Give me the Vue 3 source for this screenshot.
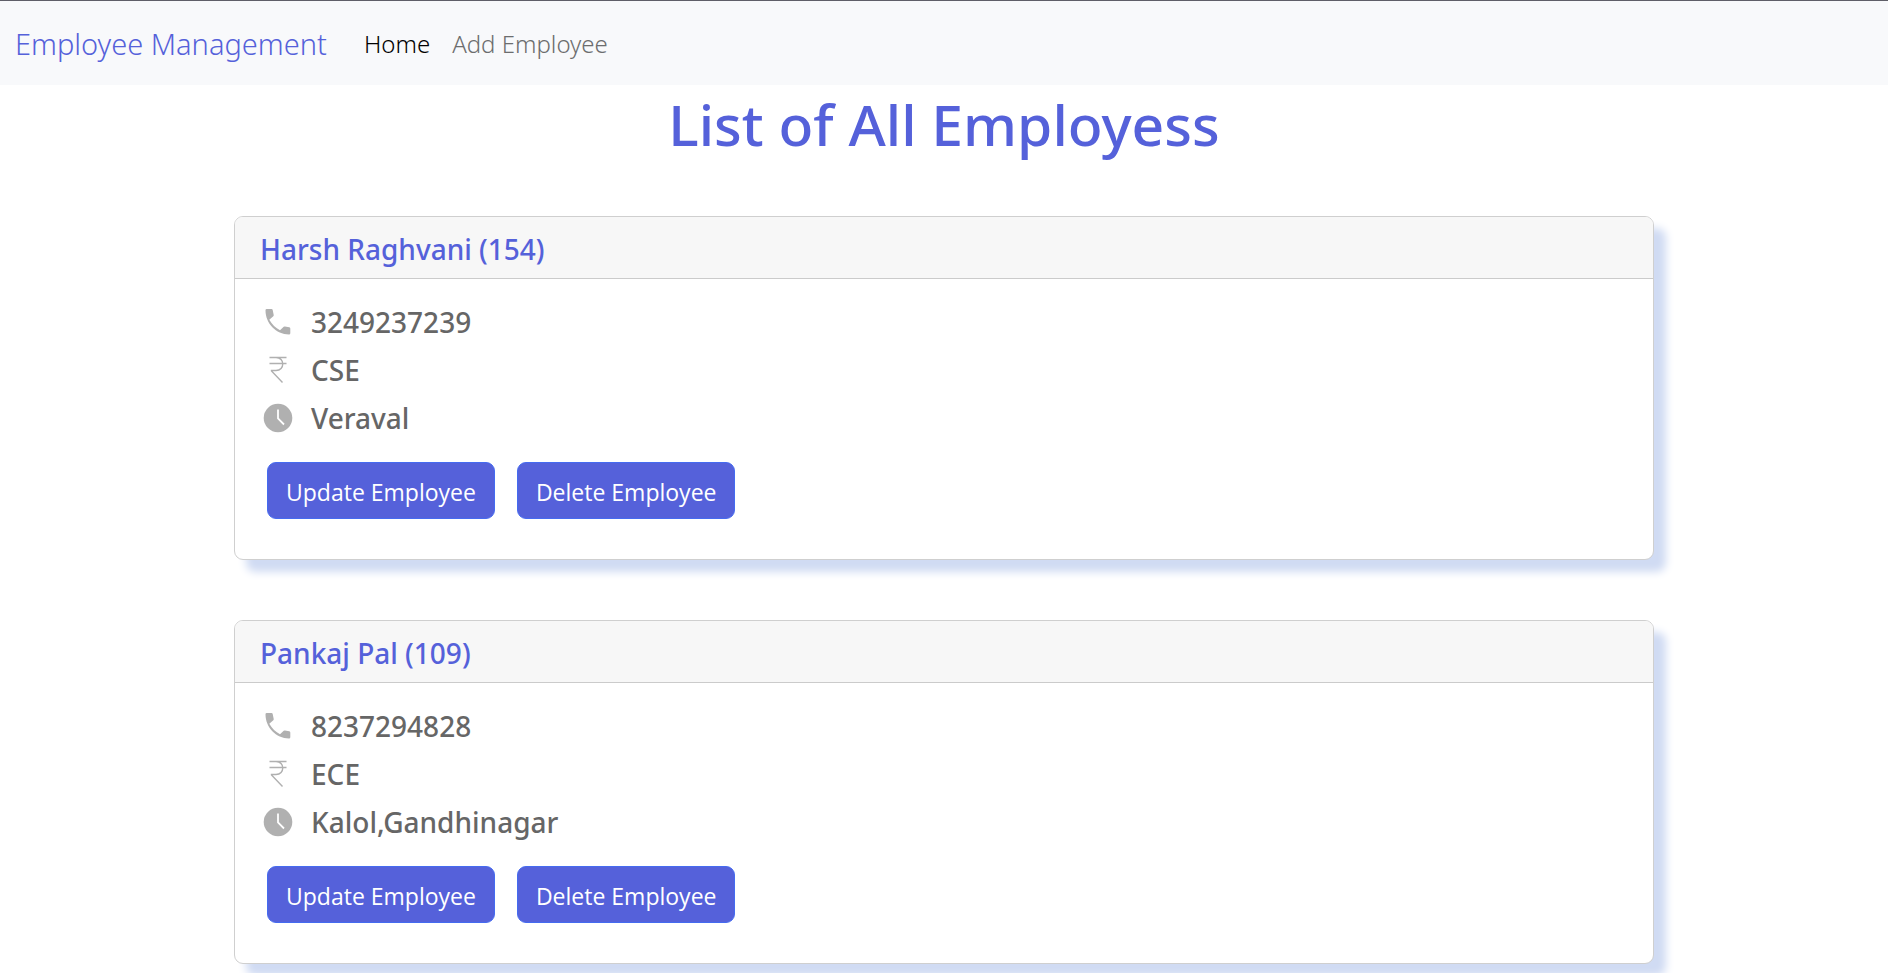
<script setup>
const employees = [
  { id: 154, name: 'Harsh Raghvani', phone: '3249237239', department: 'CSE', city: 'Veraval' },
  { id: 109, name: 'Pankaj Pal', phone: '8237294828', department: 'ECE', city: 'Kalol,Gandhinagar' },
]
</script>

<template>
  <nav class="navbar">
    <a class="brand" href="#">Employee Management</a>
    <a class="link active" href="#">Home</a>
    <a class="link" href="#">Add Employee</a>
  </nav>
  <main class="page">
    <h1 class="title">List of All Employess</h1>
    <section class="list">
      <article v-for="e in employees" :key="e.id" class="card">
        <h2 class="card-header">{{ e.name }} ({{ e.id }})</h2>
        <div class="card-body">
          <ul class="details">
            <li class="row">
              <svg class="icon" viewBox="0 0 30 30" aria-hidden="true">
                <path d="M2.500 3.200Q2.500 2 3.700 2H8.500Q9.500 2 9.700 3L10.700 8Q10.800 8.700 10.300 9.200L6.300 12.800C9 17.500 12.700 21.200 17 23.200L20.700 19.700Q21.200 19.300 21.900 19.400L26.300 20.300Q27.300 20.500 27.300 21.500V26.200Q27.300 27.500 26 27.500C13 27.200 2.500 16.500 2.500 3.200Z" fill="currentColor" />
              </svg>
              <span>{{ e.phone }}</span>
            </li>
            <li class="row">
              <svg class="icon" viewBox="0 0 30 30" aria-hidden="true">
                <path d="M6.500 2.500H23.500M6.500 8.500H23.500M8 2.500H13C22 2.500 22 15.500 13 15.500H8.500V16L19.500 27.500" fill="none" stroke="currentColor" stroke-width="1.400" />
              </svg>
              <span>{{ e.department }}</span>
            </li>
            <li class="row">
              <svg class="icon" viewBox="0 0 30 30" aria-hidden="true">
                <circle cx="15" cy="15" r="14.300" fill="currentColor" />
                <path d="M15 6.500V15.500L21 21.500" fill="none" stroke="#fff" stroke-width="1.800" />
              </svg>
              <span>{{ e.city }}</span>
            </li>
          </ul>
          <div class="actions">
            <button type="button" class="btn">Update Employee</button>
            <button type="button" class="btn">Delete Employee</button>
          </div>
        </div>
      </article>
    </section>
  </main>
</template>

<style>
body {
  margin: 0;
  background: #fff;
}
</style>

<style scoped>
.btn {
  font-family: "Open Sans", "Noto Sans", sans-serif;
}
.navbar,
.page {
  font-family: "Noto Sans", "Open Sans", sans-serif;
}
.page {
  padding-bottom: 9px;
}
.navbar {
  display: flex;
  align-items: center;
  height: 84px;
  padding: 0 15px;
  border-top: 1px solid #5f5f68;
  background: #f8f9fb;
}
.brand {
  margin-right: 37px;
  color: #5561da;
  font-size: 29px;
  font-weight: 300;
  text-decoration: none;
}
.link {
  margin-right: 22px;
  color: #6c6d6e;
  font-size: 24px;
  font-weight: 300;
  text-decoration: none;
}
.link.active {
  color: #000;
}
.title {
  margin: 0;
  color: #5561da;
  font-size: 57px;
  font-weight: 500;
  line-height: 78px;
  text-align: center;
}
.list {
  display: flex;
  flex-direction: column;
  gap: 60px;
  width: 100%;
  max-width: 1420px;
  margin: 53px auto 0;
}
.card {
  border: 1px solid #cfcfcf;
  border-radius: 9px;
  background: #fff;
  box-shadow: 12px 12px 9px #d0dbf3;
}
.card-header {
  margin: 0;
  padding: 12px 25px 9px;
  border-bottom: 1px solid #cbcbcb;
  border-radius: 8px 8px 0 0;
  background: #f7f7f7;
  color: #5561da;
  font-size: 28px;
  font-weight: 500;
  line-height: 40px;
}
.card-body {
  padding: 19px 28px 40px;
}
.details {
  margin: 0;
  padding: 0;
  list-style: none;
}
.row {
  display: flex;
  align-items: center;
  gap: 18px;
  height: 48px;
  color: #666;
  font-size: 28px;
  font-weight: 500;
}
.icon {
  width: 30px;
  height: 30px;
  color: #b0b0b0;
}
.actions {
  display: flex;
  gap: 22px;
  margin: 20px 4px 0;
}
.btn {
  height: 57px;
  padding: 2px 18px 0;
  border: 1px solid #456bf0;
  border-radius: 9px;
  background: #5561da;
  color: #fff;
  font-size: 23px;
}
</style>
